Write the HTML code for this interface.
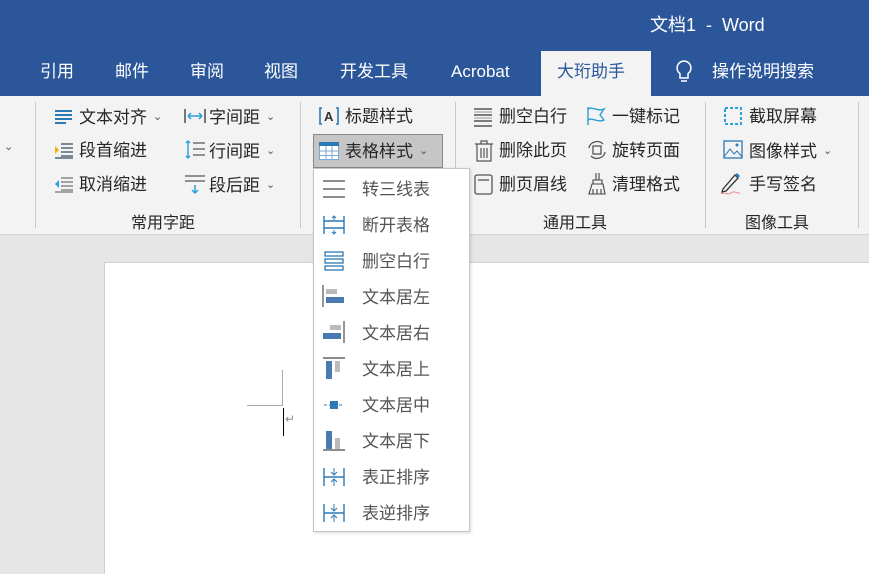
<!DOCTYPE html>
<html><head><meta charset="utf-8"><style>
*{margin:0;padding:0;box-sizing:border-box}
body{width:869px;height:574px;overflow:hidden;position:relative;background:#e6e6e6;font-family:"Liberation Sans","Noto Sans CJK SC",sans-serif;color:#262626}
.a{position:absolute;white-space:nowrap}
#top{position:absolute;left:0;top:0;width:869px;height:96px;background:#2b579a}
.tab{position:absolute;top:59px;color:#fff;font-size:17px;line-height:26px}
#rib{position:absolute;left:0;top:96px;width:869px;height:139px;background:#f3f3f3;border-bottom:1px solid #d4d4d4}
.sep{position:absolute;top:102px;width:1px;height:126px;background:#c8c8c8}
.t{position:absolute;font-size:17px;line-height:26px;color:#262626;white-space:nowrap;margin-top:1px}
.g{position:absolute;top:211px;font-size:16px;line-height:26px;color:#262626}
.car{font-size:11px;color:#555;margin-left:6px;vertical-align:3px}
#page{position:absolute;left:104px;top:262px;width:765px;height:312px;background:#fff;border-left:1px solid #d0d0d0;border-top:1px solid #d0d0d0}
#menu{position:absolute;left:313px;top:168px;width:157px;height:364px;background:#fff;border:1px solid #c6c6c6;box-shadow:1px 1px 3px rgba(0,0,0,.15)}
.mi{position:absolute;left:48px;font-size:17px;line-height:26px;color:#555;margin-top:2px}
.ic{position:absolute;left:8px}
</style></head><body>
<div id="top"></div>
<div class="a" style="left:650px;top:11px;color:#fff;font-size:18px;line-height:28px">文档1 &nbsp;-&nbsp; Word</div>
<div class="tab" style="left:40px">引用</div>
<div class="tab" style="left:115px">邮件</div>
<div class="tab" style="left:190px">审阅</div>
<div class="tab" style="left:264px">视图</div>
<div class="tab" style="left:340px">开发工具</div>
<div class="tab" style="left:451px;top:59px">Acrobat</div>
<div style="position:absolute;left:541px;top:51px;width:110px;height:46px;background:#f3f3f3"></div>
<div class="tab" style="left:557px;color:#2b579a">大珩助手</div>
<svg class="a" style="left:674px;top:59px" width="20" height="26"><path d="M10 2a7 7 0 0 0-4 12.7V19h8v-4.3A7 7 0 0 0 10 2z M7 22h6" fill="none" stroke="#fff" stroke-width="1.5"/></svg>
<div class="tab" style="left:712px">操作说明搜索</div>
<div id="rib"></div>
<div class="sep" style="left:35px"></div><div class="sep" style="left:300px"></div><div class="sep" style="left:455px"></div><div class="sep" style="left:705px"></div><div class="sep" style="left:858px"></div>
<div class="a" style="left:4px;top:140px;font-size:11px;color:#555">⌄</div>
<!-- group 1 -->
<svg class="a" style="left:54px;top:108px" width="20" height="16"><path d="M1 3h17M1 7h17M1 11h17M1 15h11" stroke="#2b79b5" stroke-width="2"/></svg>
<div class="t" style="left:79px;top:103px">文本对齐<span class="car">⌄</span></div>
<svg class="a" style="left:54px;top:142px" width="20" height="18"><path d="M7 2h12M7 6h12M7 10h12M7 14h12M1 16h18" stroke="#55687a" stroke-width="1.5"/><path d="M1 4l4 4-4 4z" fill="#f3b400"/></svg>
<div class="t" style="left:79px;top:137px">段首缩进</div>
<svg class="a" style="left:54px;top:176px" width="20" height="18"><path d="M7 2h12M7 6h12M7 10h12M7 14h12M1 16h18" stroke="#888" stroke-width="1.5"/><path d="M5 4l-4 4 4 4z" fill="#2b9fd6"/></svg>
<div class="t" style="left:79px;top:171px">取消缩进</div>
<svg class="a" style="left:184px;top:108px" width="22" height="16"><path d="M1 1v14M21 1v14" stroke="#333" stroke-width="1.3"/><path d="M4 8h14M4 8l3-3M4 8l3 3M18 8l-3-3M18 8l-3 3" stroke="#2b9fd6" stroke-width="1.5" fill="none"/></svg>
<div class="t" style="left:209px;top:103px">字间距<span class="car">⌄</span></div>
<svg class="a" style="left:184px;top:140px" width="22" height="20"><path d="M9 3h12M9 9h12M9 15h12" stroke="#555" stroke-width="1.3"/><path d="M4 1v17M2 3l2-2 2 2M2 16l2 2 2-2" stroke="#2b9fd6" stroke-width="1.4" fill="none"/></svg>
<div class="t" style="left:209px;top:137px">行间距<span class="car">⌄</span></div>
<svg class="a" style="left:184px;top:174px" width="22" height="22"><path d="M1 2h20M1 7h20" stroke="#555" stroke-width="1.3"/><path d="M11 11v8M8 16l3 3 3-3" stroke="#2b9fd6" stroke-width="1.5" fill="none"/></svg>
<div class="t" style="left:209px;top:171px">段后距<span class="car">⌄</span></div>
<div class="g" style="left:131px">常用字距</div>
<!-- group 2 -->
<svg class="a" style="left:318px;top:106px" width="22" height="20"><path d="M4 2H2v16h2M18 2h2v16h-2" stroke="#2b79b5" stroke-width="1.6" fill="none"/><text x="6" y="15" font-size="13" font-family="Liberation Sans" font-weight="bold" fill="#333">A</text></svg>
<div class="t" style="left:345px;top:103px">标题样式</div>
<div style="position:absolute;left:313px;top:134px;width:130px;height:34px;background:#c6c6c6;border:1px solid #8a8a8a"></div>
<svg class="a" style="left:319px;top:142px" width="20" height="18"><rect x="0.5" y="0.5" width="19" height="17" fill="#fff" stroke="#7aa9d6"/><rect x="0" y="0" width="20" height="4" fill="#2b79b5"/><path d="M7 4v14M13 4v14M0 9h20M0 13.5h20" stroke="#7aa9d6"/></svg>
<div class="t" style="left:345px;top:137px">表格样式<span class="car">⌄</span></div>
<!-- group 3 -->
<svg class="a" style="left:473px;top:107px" width="20" height="20"><path d="M1 2h18M1 8h18M1 14h18M1 19h18" stroke="#555" stroke-width="1.6"/><path d="M1 5h18M1 11h18" stroke="#999"/></svg>
<div class="t" style="left:499px;top:103px">删空白行</div>
<svg class="a" style="left:474px;top:140px" width="20" height="22"><path d="M1 4h18M7 4V1h6v3M3 4v17h14V4M7 8v10M10 8v10M13 8v10" stroke="#555" stroke-width="1.2" fill="none"/></svg>
<div class="t" style="left:499px;top:137px">删除此页</div>
<svg class="a" style="left:474px;top:174px" width="20" height="22"><rect x="1" y="1" width="17" height="19" rx="2" fill="none" stroke="#555" stroke-width="1.3"/><path d="M4 6h11" stroke="#555" stroke-width="1.3"/></svg>
<div class="t" style="left:499px;top:171px">删页眉线</div>
<svg class="a" style="left:586px;top:106px" width="22" height="20"><path d="M2 1v18M2 3c5-3 9 3 16 0l-4 6 4 5c-7 3-11-3-16 0" stroke="#2b9fd6" stroke-width="1.4" fill="none"/></svg>
<div class="t" style="left:612px;top:103px">一键标记</div>
<svg class="a" style="left:586px;top:140px" width="22" height="20"><rect x="7" y="6" width="8" height="8" fill="none" stroke="#555" stroke-width="1.3"/><path d="M3 8a8 7 0 0 1 14-4M19 12a8 7 0 0 1-14 4" stroke="#555" stroke-width="1.3" fill="none"/></svg>
<div class="t" style="left:612px;top:137px">旋转页面</div>
<svg class="a" style="left:586px;top:172px" width="22" height="24"><path d="M10 1v7M13 1v7M7 8h9v4H7zM6 12h11l2 10H3z M7 22v-5M11 22v-5M15 22v-5" stroke="#444" stroke-width="1.1" fill="none"/></svg>
<div class="t" style="left:612px;top:171px">清理格式</div>
<div class="g" style="left:543px">通用工具</div>
<!-- group 4 -->
<svg class="a" style="left:723px;top:106px" width="20" height="20"><rect x="2" y="2" width="16" height="16" fill="none" stroke="#2b9fd6" stroke-width="2" stroke-dasharray="3 2"/></svg>
<div class="t" style="left:749px;top:103px">截取屏幕</div>
<svg class="a" style="left:723px;top:140px" width="20" height="20"><rect x="1" y="1" width="18" height="17" fill="none" stroke="#2b79b5" stroke-width="1.3"/><path d="M1 17l6-8 4 5 3-3 5 6" stroke="#2b79b5" fill="none"/><circle cx="14" cy="5" r="1.5" fill="#2b79b5"/></svg>
<div class="t" style="left:749px;top:137px">图像样式<span class="car">⌄</span></div>
<svg class="a" style="left:719px;top:172px" width="24" height="26"><path d="M4 17L16 3l3 3L7 19l-4 1z" stroke="#333" stroke-width="1.3" fill="none"/><path d="M16 3l2-2 3 3-2 2z" fill="#2b79b5"/><path d="M2 22c4-3 6 2 10-1s6 1 9 0" stroke="#e88" fill="none"/></svg>
<div class="t" style="left:749px;top:171px">手写签名</div>
<div class="g" style="left:745px">图像工具</div>
<div id="page"></div>
<div class="a" style="left:247px;top:405px;width:36px;height:1px;background:#aaa"></div>
<div class="a" style="left:282px;top:370px;width:1px;height:36px;background:#aaa"></div>
<div class="a" style="left:283px;top:408px;width:1px;height:28px;background:#000"></div>
<div class="a" style="left:285px;top:412px;font-size:12px;color:#888">↵</div>
<div id="menu">
<svg class="ic" style="top:10px" width="24" height="20"><path d="M1 2h22M1 10h22M1 18h22" stroke="#666" stroke-width="1.6"/></svg><div class="mi" style="top:6px">转三线表</div>
<svg class="ic" style="top:46px" width="24" height="20"><path d="M2 1v18M22 1v18M2 6h20M2 13h20" stroke="#2b79b5" stroke-width="1.4" fill="none"/><path d="M12 1v4M10 3l2-2 2 2M12 15v4M10 17l2 2 2-2" stroke="#2b79b5" fill="none"/></svg><div class="mi" style="top:42px">断开表格</div>
<svg class="ic" style="top:82px" width="24" height="20"><rect x="3" y="1" width="18" height="4" fill="none" stroke="#2b79b5" stroke-width="1.3"/><rect x="3" y="8" width="18" height="4" fill="none" stroke="#2b79b5" stroke-width="1.3"/><rect x="3" y="15" width="18" height="4" fill="none" stroke="#2b79b5" stroke-width="1.3"/></svg><div class="mi" style="top:78px">删空白行</div>
<svg class="ic" style="top:116px" width="24" height="22"><path d="M1 0v22" stroke="#666" stroke-width="1.4"/><rect x="4" y="4" width="11" height="5" fill="#bbb"/><rect x="4" y="12" width="18" height="6" fill="#4a7ab0"/></svg><div class="mi" style="top:114px">文本居左</div>
<svg class="ic" style="top:152px" width="24" height="22"><path d="M22 0v22" stroke="#666" stroke-width="1.4"/><rect x="8" y="4" width="11" height="5" fill="#bbb"/><rect x="1" y="12" width="18" height="6" fill="#4a7ab0"/></svg><div class="mi" style="top:150px">文本居右</div>
<svg class="ic" style="top:188px" width="24" height="22"><path d="M1 1h22" stroke="#666" stroke-width="1.4"/><rect x="4" y="4" width="6" height="18" fill="#4a7ab0"/><rect x="13" y="4" width="5" height="11" fill="#bbb"/></svg><div class="mi" style="top:186px">文本居上</div>
<svg class="ic" style="top:226px" width="24" height="20"><path d="M2 10h20" stroke="#2b79b5" stroke-dasharray="3 2"/><rect x="8" y="6" width="8" height="8" fill="#2b79b5"/></svg><div class="mi" style="top:222px">文本居中</div>
<svg class="ic" style="top:260px" width="24" height="22"><path d="M1 21h22" stroke="#666" stroke-width="1.4"/><rect x="4" y="2" width="6" height="18" fill="#4a7ab0"/><rect x="13" y="9" width="5" height="11" fill="#bbb"/></svg><div class="mi" style="top:258px">文本居下</div>
<svg class="ic" style="top:298px" width="24" height="20"><path d="M2 1v18M22 1v18M2 10h20" stroke="#2b79b5" stroke-width="1.4"/><path d="M12 1v7M9 5l3 3 3-3M12 19v-7M9 15l3-3 3 3" stroke="#2b79b5" fill="none"/></svg><div class="mi" style="top:294px">表正排序</div>
<svg class="ic" style="top:334px" width="24" height="20"><path d="M2 1v18M22 1v18M2 10h20" stroke="#2b79b5" stroke-width="1.4"/><path d="M12 1v7M9 5l3 3 3-3M12 19v-7M9 15l3-3 3 3" stroke="#2b79b5" fill="none"/></svg><div class="mi" style="top:330px">表逆排序</div>
</div>
</body></html>
